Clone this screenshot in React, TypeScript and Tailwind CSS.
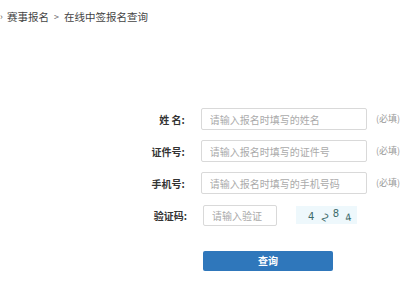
import React from "react";

const font = { fontFamily: '"Microsoft YaHei", "Noto Sans CJK SC", sans-serif' };

function Row({ label, placeholder }: { label: string; placeholder: string }) {
  return (
    <div className="flex items-center h-[22px]">
      <div className="w-[187px] text-right text-[10px] font-bold text-[#333]">{label}</div>
      <input
        className="ml-[16px] w-[168px] h-[22px] border border-[#d9d9d9] rounded-[2px] px-[8px] text-[10px] outline-none placeholder:text-[#aaa]"
        placeholder={placeholder}
      />
      <span className="ml-[9px] text-[9px] text-[#999] whitespace-nowrap">(必填)</span>
    </div>
  );
}

export default function App() {
  return (
    <div className="w-[400px] h-[300px] bg-white overflow-hidden" style={font}>
      {/* breadcrumb */}
      <div className="flex items-center h-[34px] text-[10.5px] text-[#444] whitespace-nowrap">
        <span className="text-[9px] text-[#666] w-[7px]">›</span>
        <span>赛事报名</span>
        <span className="mx-[5px] text-[9px] text-[#666]">&gt;</span>
        <span>在线中签报名查询</span>
      </div>

      <div className="mt-[74px] flex flex-col gap-[10px]">
        <Row label="姓 名:" placeholder="请输入报名时填写的姓名" />
        <Row label="证件号:" placeholder="请输入报名时填写的证件号" />
        <Row label="手机号:" placeholder="请输入报名时填写的手机号码" />
        <div className="flex items-center h-[22px]">
          <div className="w-[187px] text-right text-[10px] font-bold text-[#333]">验证码:</div>
          <input
            className="ml-[16px] w-[74px] h-[21px] border border-[#d9d9d9] rounded-[2px] px-[8px] text-[10px] outline-none placeholder:text-[#aaa]"
            placeholder="请输入验证"
          />
          {/* captcha image */}
          <div
            className="ml-[19px] w-[61px] h-[18px] bg-[#eef8fc] flex items-center pl-[12px] text-[10px] text-[#3d6b6b]"
            style={{ fontFamily: '"DejaVu Sans", sans-serif' }}
          >
            <span className="translate-y-[1px]">4</span>
            <span className="ml-[8px] rotate-[30deg] translate-y-[2px]">2</span>
            <span className="ml-[4px] -translate-y-[2px]">8</span>
            <span className="ml-[6px] translate-y-[2px] rotate-[-10deg]">4</span>
          </div>
        </div>
      </div>

      <div className="mt-[20px] ml-[203px]">
        <button className="w-[130px] h-[20px] bg-[#2f77bb] rounded-[2px] text-white text-[10px] font-bold">查询</button>
      </div>
    </div>
  );
}
